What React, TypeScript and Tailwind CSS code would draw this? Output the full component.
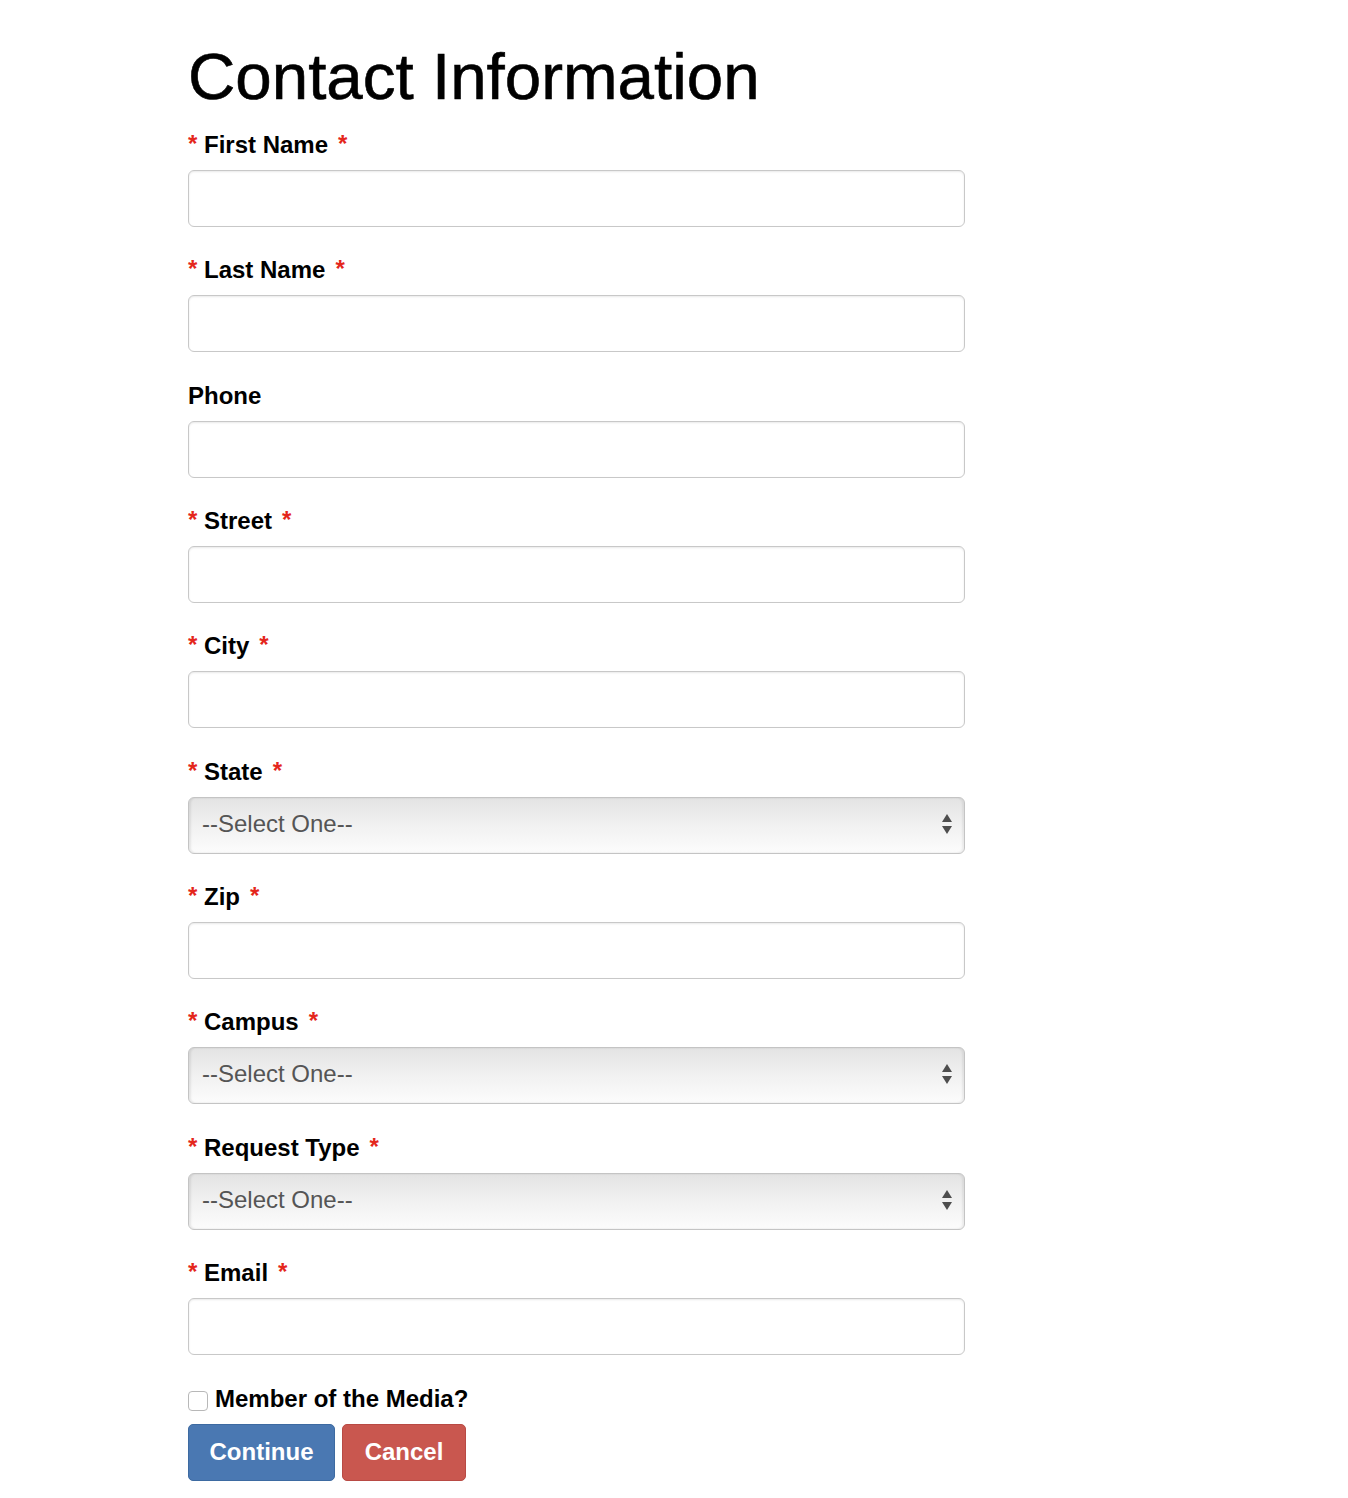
import { ChangeEvent, useState } from 'react'

type Field = {
  name: string
  label: string
  required: boolean
  kind: 'text' | 'select'
}

const fields: Field[] = [
  { name: 'firstName', label: 'First Name', required: true, kind: 'text' },
  { name: 'lastName', label: 'Last Name', required: true, kind: 'text' },
  { name: 'phone', label: 'Phone', required: false, kind: 'text' },
  { name: 'street', label: 'Street', required: true, kind: 'text' },
  { name: 'city', label: 'City', required: true, kind: 'text' },
  { name: 'state', label: 'State', required: true, kind: 'select' },
  { name: 'zip', label: 'Zip', required: true, kind: 'text' },
  { name: 'campus', label: 'Campus', required: true, kind: 'select' },
  { name: 'requestType', label: 'Request Type', required: true, kind: 'select' },
  { name: 'email', label: 'Email', required: true, kind: 'text' },
]

function Star() {
  return <span className="text-[#e4261c] font-bold relative -top-[1px]">*</span>
}

function SelectBox({ name }: { name: string }) {
  return (
    <div className="relative w-[777px] h-[57px]">
      <select
        name={name}
        defaultValue=""
        className="appearance-none w-full h-full pl-[13px] pr-10 pb-[3px] text-[24px] text-[#555] rounded-[6px] border border-[#c4c4c4] bg-gradient-to-b from-[#e3e3e3] via-[#f1f1f1] to-[#fcfcfc] shadow-[inset_2px_0_2px_rgba(0,0,0,0.08),inset_-2px_0_2px_rgba(0,0,0,0.06)] outline-none"
      >
        <option value="">--Select One--</option>
      </select>
      {/* up/down arrows */}
      <svg
        className="absolute right-[12px] top-[15px] pointer-events-none"
        width="12"
        height="24"
        viewBox="0 0 12 24"
      >
        <path d="M6 2 L11 10 L1 10 Z" fill="#4d4d4d" />
        <path d="M6 22 L11 14 L1 14 Z" fill="#4d4d4d" />
      </svg>
    </div>
  )
}

export default function App() {
  const [values, setValues] = useState<Record<string, string>>({})
  const [media, setMedia] = useState(false)

  const onChange = (e: ChangeEvent<HTMLInputElement>) =>
    setValues({ ...values, [e.target.name]: e.target.value })

  return (
    <div className="min-h-screen bg-white pl-[188px] pt-[44px] pb-[18px] font-['Liberation_Sans',Arial,sans-serif] text-black">
      <h1 className="text-[65.5px] leading-none h-[65px] font-normal [-webkit-text-stroke:0.6px_black]">
        Contact Information
      </h1>

      <form className="mt-[24px] flex flex-col gap-[31.33px]">
        {fields.map((f) => (
          <div key={f.name} className="flex flex-col gap-[13px]">
            <label className="text-[24px] leading-[24px] h-[24px] font-bold whitespace-pre">
              {f.required && <Star />}
              {f.required ? ' ' : ''}
              {f.label}
              {f.required && <span className="ml-[10px]"><Star /></span>}
            </label>
            {f.kind === 'select' ? (
              <SelectBox name={f.name} />
            ) : (
              <input
                type="text"
                name={f.name}
                value={values[f.name] ?? ''}
                onChange={onChange}
                className="w-[777px] h-[57px] px-3 text-[24px] rounded-[6px] border border-[#c8c8c8] bg-white shadow-[inset_0_1px_2px_rgba(0,0,0,0.09)] outline-none"
              />
            )}
          </div>
        ))}
      </form>

      <label className="mt-[32px] flex items-center h-[24px] text-[24px] leading-[24px] font-bold">
        <input
          type="checkbox"
          checked={media}
          onChange={(e) => setMedia(e.target.checked)}
          className="appearance-none w-[20px] h-[20px] mt-[5px] mr-[7px] rounded-[4px] border border-[#b8b8b8] bg-white"
        />
        Member of the Media?
      </label>

      <div className="mt-[13px] flex gap-[7px]">
        <button
          type="button"
          className="w-[147px] h-[57px] rounded-[5px] border border-[#3d6aa1] bg-[#4a78b2] text-white text-[24px] font-bold"
        >
          Continue
        </button>
        <button
          type="button"
          className="w-[124px] h-[57px] rounded-[5px] border border-[#b84a44] bg-[#c9574f] text-white text-[24px] font-bold"
        >
          Cancel
        </button>
      </div>
    </div>
  )
}
